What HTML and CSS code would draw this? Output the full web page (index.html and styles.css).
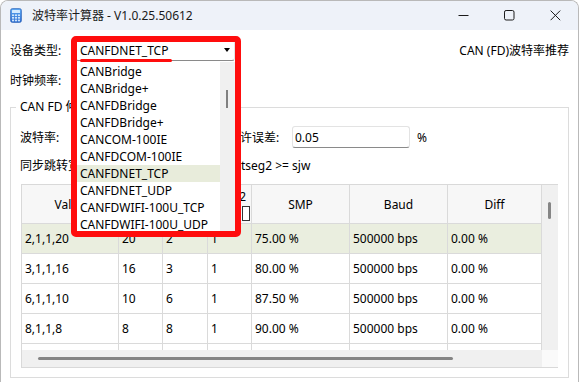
FILE: index.html
```html
<!DOCTYPE html>
<html>
<head>
    <meta charset="utf-8">
    <title>波特率计算器</title>
    <link rel="stylesheet" href="styles.css">
</head>
<body>
<div class="window">
    <div class="titlebar">
        <svg class="app-icon" viewBox="0 0 12 15">
            <defs>
                <linearGradient id="calc" x1="0" y1="0" x2="0" y2="1">
                    <stop offset="0" stop-color="#5aa6f2"/>
                    <stop offset="1" stop-color="#2c6cd0"/>
                </linearGradient>
            </defs>
            <rect x="0.5" y="0.5" width="11" height="14" rx="2" fill="url(#calc)" stroke="#2b60b4" stroke-width="0.6"/>
            <rect x="2" y="2" width="8" height="3" rx="0.6" fill="#d4eaff"/>
            <g fill="#cfe4fb">
                <rect x="2" y="6.4" width="2.1" height="1.7"/>
                <rect x="4.95" y="6.4" width="2.1" height="1.7"/>
                <rect x="7.9" y="6.4" width="2.1" height="1.7"/>
                <rect x="2" y="9" width="2.1" height="1.7"/>
                <rect x="4.95" y="9" width="2.1" height="1.7"/>
                <rect x="7.9" y="9" width="2.1" height="1.7"/>
                <rect x="2" y="11.6" width="2.1" height="1.7"/>
                <rect x="4.95" y="11.6" width="2.1" height="1.7"/>
                <rect x="7.9" y="11.6" width="2.1" height="1.7"/>
            </g>
        </svg>
        <span class="title">波特率计算器 - V1.0.25.50612</span>
        <div class="controls">
            <span class="ctl">
                <svg width="11" height="11" viewBox="0 0 11 11"><path d="M0.5 5.5h10" stroke="#1b1b1b" stroke-width="1"/></svg>
            </span>
            <span class="ctl">
                <svg width="11" height="11" viewBox="0 0 11 11"><rect x="0.5" y="0.5" width="9.5" height="9.5" rx="1.6" fill="none" stroke="#1b1b1b" stroke-width="1"/></svg>
            </span>
            <span class="ctl">
                <svg width="11" height="11" viewBox="0 0 11 11"><path d="M0.6 0.6L10.2 10.2M10.2 0.6L0.6 10.2" stroke="#1b1b1b" stroke-width="1"/></svg>
            </span>
        </div>
    </div>

    <div class="content">
        <div class="row top-row">
            <label class="lbl">设备类型:</label>
            <div class="combo">
                <span>CANFDNET_TCP</span>
                <span class="arrow"></span>
            </div>
            <a class="link">CAN (FD)波特率推荐</a>
        </div>

        <div class="row clock-row">
            <label class="lbl">时钟频率:</label>
            <div class="combo">
                <span>60 MHz</span>
                <span class="arrow"></span>
            </div>
        </div>

        <fieldset class="group">
            <legend>CAN FD 仲裁域</legend>

            <div class="row baud-row">
                <label class="lbl-baud">波特率:</label>
                <input class="edit edit-baud" type="text" value="500000">
                <label class="lbl-err">允许误差:</label>
                <input class="edit edit-err" type="text" value="0.05">
                <span class="unit">%</span>
            </div>

            <div class="hint"><span class="hint-a">同步跳转宽度需满足: tseg1 &gt;= sjw,</span>tseg2 &gt;= sjw</div>

            <div class="grid">
                <div class="tbl">
                    <div class="tr head">
                        <div class="cell">Value</div>
                        <div class="cell">Tseg1</div>
                        <div class="cell">BRP</div>
                        <div class="cell cell-chk">
                            <span>Tseg2</span>
                            <span class="chk"></span>
                        </div>
                        <div class="cell">SMP</div>
                        <div class="cell">Baud</div>
                        <div class="cell">Diff</div>
                    </div>
                    <div class="tr sel">
                        <div class="cell">2,1,1,20</div><div class="cell">20</div><div class="cell">2</div><div class="cell">1</div>
                        <div class="cell">75.00 %</div><div class="cell">500000 bps</div><div class="cell">0.00 %</div>
                    </div>
                    <div class="tr">
                        <div class="cell">3,1,1,16</div><div class="cell">16</div><div class="cell">3</div><div class="cell">1</div>
                        <div class="cell">80.00 %</div><div class="cell">500000 bps</div><div class="cell">0.00 %</div>
                    </div>
                    <div class="tr">
                        <div class="cell">6,1,1,10</div><div class="cell">10</div><div class="cell">6</div><div class="cell">1</div>
                        <div class="cell">87.50 %</div><div class="cell">500000 bps</div><div class="cell">0.00 %</div>
                    </div>
                    <div class="tr">
                        <div class="cell">8,1,1,8</div><div class="cell">8</div><div class="cell">8</div><div class="cell">1</div>
                        <div class="cell">90.00 %</div><div class="cell">500000 bps</div><div class="cell">0.00 %</div>
                    </div>
                    <div class="tr">
                        <div class="cell">10,1,1,6</div><div class="cell">6</div><div class="cell">10</div><div class="cell">1</div>
                        <div class="cell">87.50 %</div><div class="cell">500000 bps</div><div class="cell">0.00 %</div>
                    </div>
                </div>
                <div class="vscroll"><div class="vthumb"></div></div>
                <div class="hscroll"><div class="hthumb"></div></div>
                <div class="corner"></div>
            </div>
        </fieldset>
    </div>

    <!-- open combobox list -->
    <div class="popup">
        <ul class="items">
            <li>CANBridge</li>
            <li>CANBridge+</li>
            <li>CANFDBridge</li>
            <li>CANFDBridge+</li>
            <li>CANCOM-100IE</li>
            <li>CANFDCOM-100IE</li>
            <li class="cur">CANFDNET_TCP</li>
            <li>CANFDNET_UDP</li>
            <li>CANFDWIFI-100U_TCP</li>
            <li>CANFDWIFI-100U_UDP</li>
        </ul>
        <div class="pscroll"><div class="pthumb"></div></div>
    </div>

    <!-- red annotation -->
    <div class="mark-box"></div>
    <div class="mark-line"></div>
</div>
</body>
</html>
```

FILE: styles.css
```css
* {
    margin: 0;
    padding: 0;
    box-sizing: border-box;
}

body {
    font-family: "Noto Sans", "Noto Sans CJK SC", sans-serif;
    font-size: 12px;
    color: #000;
    background: #fff;
}

.window {
    position: relative;
    width: 579px;
    height: 382px;
    border: 1px solid #b9b9b9;
    border-bottom: none;
    border-radius: 8px 8px 0 0;
    overflow: hidden;
    background: #fff;
}

/* title bar */
.titlebar {
    height: 29px;
    background: #eef2f9;
    display: flex;
    align-items: center;
}

.app-icon {
    width: 12px;
    height: 15px;
    margin-left: 9px;
}

.title {
    margin-left: 10px;
    color: #1b1b1b;
    line-height: 16px;
}

.controls {
    margin-left: auto;
    display: flex;
    height: 100%;
}

.ctl {
    width: 46px;
    display: flex;
    align-items: center;
    justify-content: center;
}

/* body */
.content {
    padding: 10px 9px 0 9px;
}

.row {
    display: flex;
    align-items: center;
}

.top-row,
.clock-row {
    height: 21px;
}

.clock-row {
    margin-top: 9px;
}

.lbl {
    width: 65px;
    line-height: 16px;
}

.combo {
    position: relative;
    width: 160px;
    height: 21px;
    display: flex;
    align-items: center;
    padding-left: 4px;
    background: #fff;
    border: 1px solid #e3e3e3;
    border-bottom-color: #8a8a8a;
    border-radius: 3px;
}

.combo .arrow {
    position: absolute;
    right: 4px;
    top: 7px;
    width: 0;
    height: 0;
    border-left: 3.5px solid transparent;
    border-right: 3.5px solid transparent;
    border-top: 4px solid #000;
}

.link {
    margin-left: auto;
    line-height: 16px;
}

/* group box */
.group {
    margin-top: 8px;
    min-width: 0;
    border: 1px solid #dcdcdc;
    padding: 11px 10px 9px 9px;
}

.group legend {
    margin-left: -4px;
    padding: 0 4px;
    line-height: 16px;
}

.baud-row {
    height: 22px;
}

.lbl-baud {
    width: 55px;
}

.lbl-err {
    width: 64px;
}

.edit {
    height: 22px;
    font-family: inherit;
    font-size: 12px;
    color: #000;
    padding-left: 2px;
    border: 1px solid #e3e3e3;
    border-bottom-color: #8a8a8a;
    border-radius: 3px;
    background: #fff;
}

.edit-baud {
    width: 145px;
    margin-right: 8px;
}

.edit-err {
    width: 118px;
}

.unit {
    margin-left: 7px;
}

.hint {
    margin-top: 10px;
    line-height: 16px;
    white-space: nowrap;
}

.hint-a {
    display: inline-block;
    width: 221px;
    overflow: hidden;
    vertical-align: top;
}

/* result table */
.grid {
    margin-top: 10px;
    margin-left: 1px;
    height: 184px;
    border: 1px solid #d9d9d9;
    display: grid;
    grid-template-columns: 520px 16px;
    grid-template-rows: 165px 17px;
}

.tbl {
    overflow: hidden;
}

.tr {
    display: grid;
    grid-template-columns: 97px 44px 45px 44px 98px 98px 94px;
    height: 30px;
}

.tr.head {
    height: 39px;
    background: #f7f7f7;
}

.tr.sel {
    background: #eaeedf;
}

.cell {
    display: flex;
    align-items: center;
    padding-left: 3px;
    border-right: 1px solid #dadada;
    border-bottom: 1px solid #dadada;
    white-space: nowrap;
    overflow: hidden;
}

.head .cell {
    justify-content: center;
    padding-left: 0;
}

.head .cell-chk {
    flex-direction: column;
    align-items: flex-end;
    justify-content: center;
    padding-right: 5px;
}

.chk {
    display: block;
    width: 8px;
    height: 15px;
    margin-top: 1px;
    margin-right: -4px;
    border: 1px solid #333;
    background: #fff;
}

.vscroll {
    background: #f0f0f0;
    padding: 17px 0 0 6px;
}

.vthumb {
    width: 3px;
    height: 17px;
    background: #858585;
    border-radius: 2px;
}

.hscroll {
    background: #f0f0f0;
    padding: 7px 0 0 16px;
}

.hthumb {
    width: 415px;
    height: 3px;
    background: #858585;
    border-radius: 2px;
}

.corner {
    background: #fafafa;
}

/* dropdown list */
.popup {
    position: absolute;
    left: 76px;
    top: 61px;
    width: 158px;
    height: 172px;
    background: #fff;
    display: flex;
    overflow: hidden;
}

.items {
    list-style: none;
    width: 143px;
    padding-top: 1px;
}

.items li {
    height: 17px;
    line-height: 17px;
    padding-left: 3px;
    white-space: nowrap;
}

.items li.cur {
    background: #e8ecdb;
}

.pscroll {
    width: 15px;
    background: #f0f0f0;
    padding: 28px 0 0 6px;
}

.pthumb {
    width: 2px;
    height: 18px;
    background: #808080;
}

/* red markup drawn on the screenshot */
.mark-box {
    position: absolute;
    left: 70px;
    top: 35px;
    width: 170px;
    height: 201px;
    border: 6px solid #ff0d0d;
    border-radius: 5px;
}

.mark-line {
    position: absolute;
    left: 79px;
    top: 58px;
    width: 92px;
    height: 3px;
    background: #ff0d0d;
    border-radius: 2px;
}
```
